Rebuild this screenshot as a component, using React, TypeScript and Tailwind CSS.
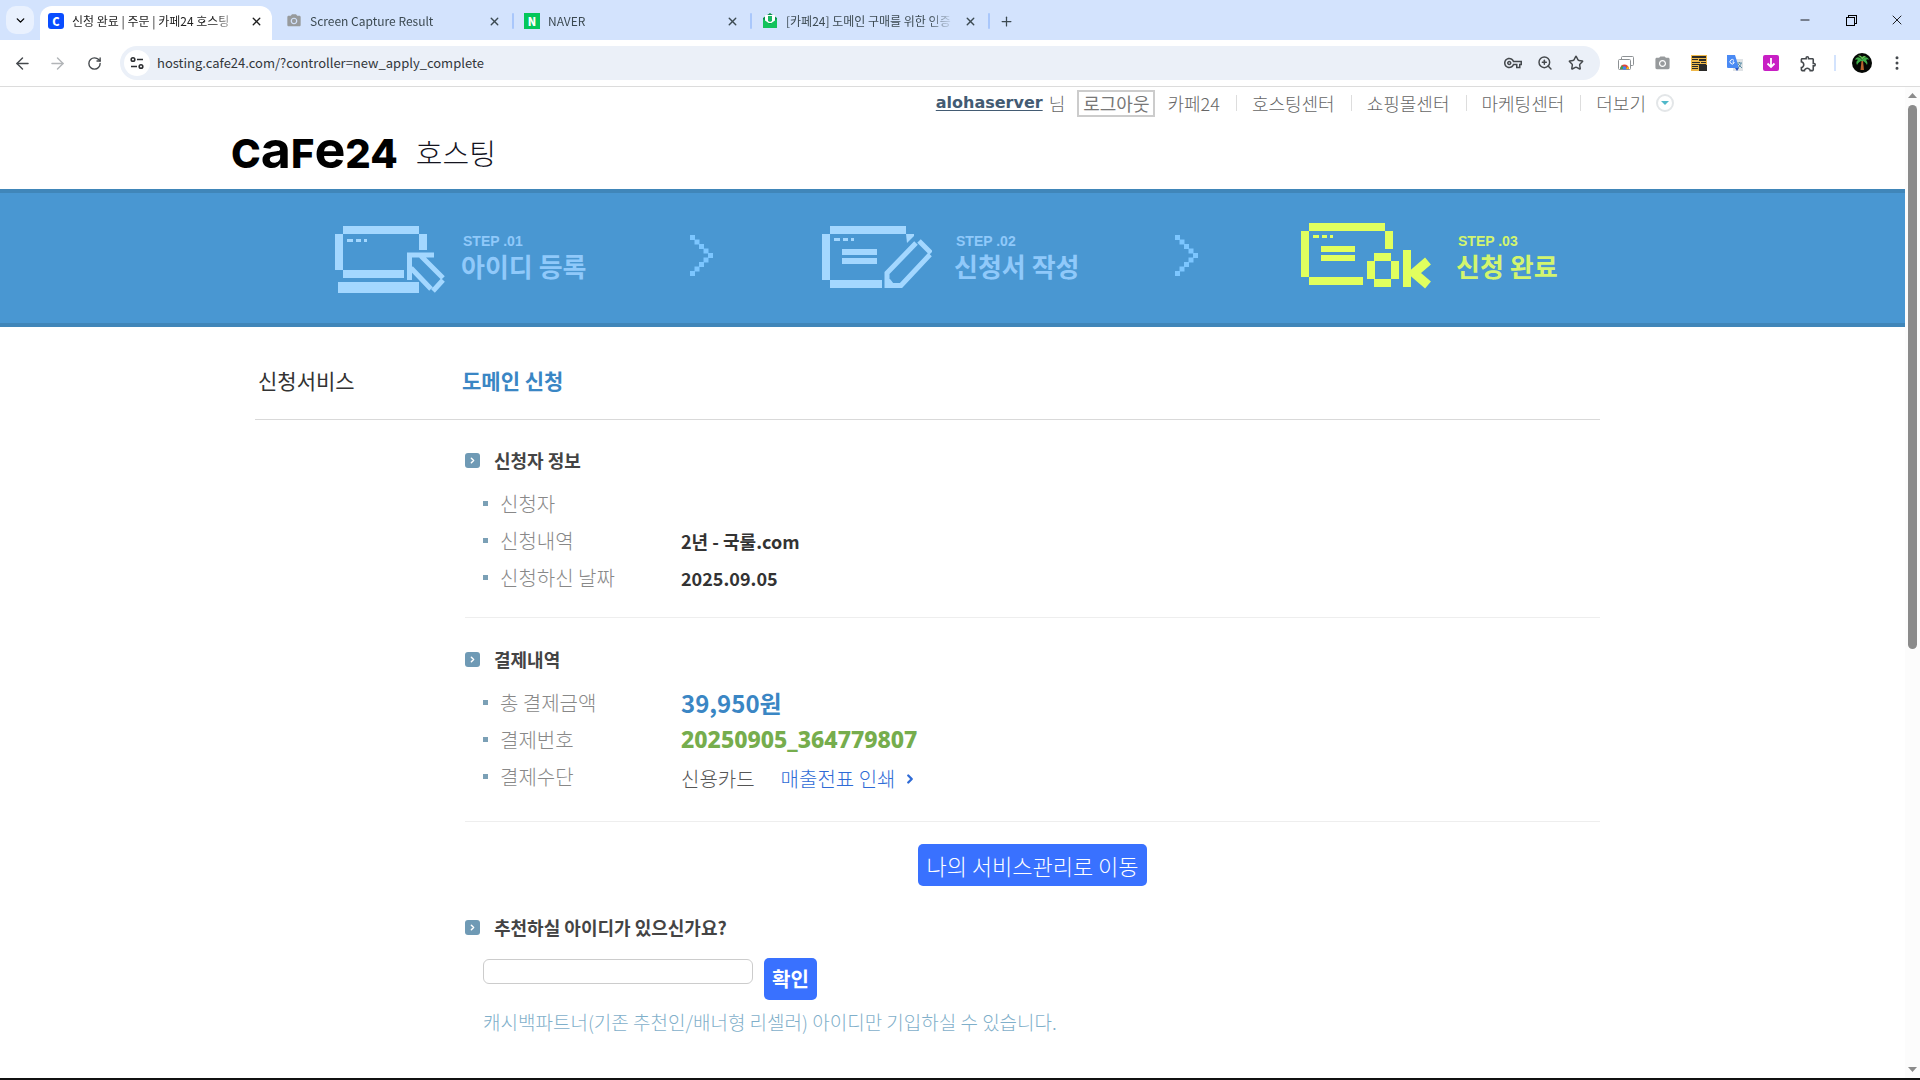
import React from 'react';
import {
  ArrowLeft,
  ArrowRight,
  ChevronDown,
  ChevronRight,
  EllipsisVertical,
  Minus,
  Plus,
  RotateCw,
  Star,
  X,
  ZoomIn,
} from 'lucide-react';
import { MdOutlineExtension, MdOutlineVpnKey, MdPhotoCamera } from 'react-icons/md';

interface TabProps {
  title: string;
  icon: React.ReactNode;
  active?: boolean;
}

const LetterIcon = ({ letter, className }: { letter: string; className: string }) => (
  <span
    className={`flex size-4 shrink-0 items-center justify-center text-[11px] leading-none font-black text-white ${className}`}
  >
    {letter}
  </span>
);

const MailIcon = () => (
  <svg viewBox="0 0 16 16" className="size-4 shrink-0">
    <path d="M1 5 8 0l7 5v9a1 1 0 0 1-1 1H2a1 1 0 0 1-1-1z" fill="#0d8f4c" />
    <rect x="3" y="2" width="10" height="8" rx="1" fill="#fff" />
    <path d="M6 3h4v5l-2 1-2-1z" fill="#19b862" />
    <path d="M1 6l7 5 7-5v8a1 1 0 0 1-1 1H2a1 1 0 0 1-1-1z" fill="#12c35c" />
  </svg>
);

const Tab = ({ title, icon, active }: TabProps) => (
  <div
    className={`flex h-[34px] items-center pb-1 ${
      active ? 'w-[232px] rounded-t-xl bg-white px-2 text-[#1f1f1f]' : 'w-[236px] px-[10px] text-[#3c4a52]'
    }`}
  >
    {icon}
    <span className="ml-2 flex-1 overflow-hidden mask-r-from-85% text-[12px] whitespace-nowrap">{title}</span>
    <button type="button" aria-label="탭 닫기" className="ml-2 flex size-4 items-center justify-center">
      <X size={13} strokeWidth={2.5} />
    </button>
  </div>
);

const TabDivider = () => <span className="mb-1 h-4 w-[2px] shrink-0 rounded bg-[#a9c7fb]" />;

function TabStrip() {
  return (
    <div className="flex h-10 shrink-0 items-end bg-[#d3e3fd] pl-[6px]">
      <button
        type="button"
        aria-label="탭 검색"
        className="mr-[6px] mb-[6px] flex size-7 items-center justify-center rounded-[10px] bg-[#e9f1fe]"
      >
        <ChevronDown size={13} strokeWidth={2.5} />
      </button>
      <Tab active title="신청 완료 | 주문 | 카페24 호스팅" icon={<LetterIcon letter="C" className="rounded-[3px] bg-[#0a4dff]" />} />
      <div className="flex items-center pl-1">
        <Tab title="Screen Capture Result" icon={<MdPhotoCamera className="size-4 shrink-0 text-[#979a9c]" />} />
        <TabDivider />
        <Tab title="NAVER" icon={<LetterIcon letter="N" className="bg-[#03c75a]" />} />
        <TabDivider />
        <Tab title="[카페24] 도메인 구매를 위한 인증" icon={<MailIcon />} />
        <TabDivider />
        <button type="button" aria-label="새 탭" className="mb-1 ml-[6px] flex size-5 items-center justify-center text-[#3c4a52]">
          <Plus size={15} strokeWidth={2} />
        </button>
      </div>
      <div className="ml-auto flex h-10 items-center">
        <button type="button" aria-label="최소화" className="flex w-[46px] justify-center">
          <Minus size={14} strokeWidth={1.5} />
        </button>
        <button type="button" aria-label="이전 크기로" className="flex w-[46px] justify-center">
          <svg viewBox="0 0 11 11" className="size-[11px]" fill="none" stroke="#000" shapeRendering="crispEdges">
            <rect x="0.5" y="2.5" width="8" height="8" />
            <path d="M2.5 2V.5h8v8H9" />
          </svg>
        </button>
        <button type="button" aria-label="닫기" className="flex w-[46px] justify-center">
          <X size={16} strokeWidth={1.3} />
        </button>
      </div>
    </div>
  );
}

const Palm = () => (
  <svg viewBox="0 0 20 20" className="size-5">
    <circle cx="10" cy="10" r="10" fill="#050805" />
    <path d="M9.500 8l-1 9h3.500l-1-9z" fill="#b8622d" />
    <path d="M10 7C7 3 4 4 3 7c2-1 3 0 3 0-2 1-2 3-1 5 1-2 3-4 5-4 2 0 4 2 5 4 1-2 0-4-1-5 1-1 2-1 3 0-1-3-4-4-7 0z" fill="#3fae49" />
    <path d="M10 7c-1-3-3-4-4-4 2-1 4 0 4 2 0-2 3-3 4-1-1 0-3 1-4 3z" fill="#6bd05a" />
  </svg>
);

function Toolbar() {
  return (
    <div className="flex h-[47px] shrink-0 items-center border-b border-[#dcdcdc] bg-white pr-[14px] pl-[13px] text-[#45494d]">
      <button type="button" aria-label="뒤로"><ArrowLeft size={19} strokeWidth={1.8} /></button>
      <button type="button" aria-label="앞으로" className="ml-4 text-[#b2b5b8]"><ArrowRight size={19} strokeWidth={1.8} /></button>
      <button type="button" aria-label="새로고침" className="ml-5"><RotateCw size={15} strokeWidth={2.2} /></button>
      <div className="ml-[18px] flex h-[34px] flex-1 items-center rounded-full bg-[#ebf0f8] pr-4 pl-1">
        <button type="button" aria-label="사이트 정보" className="flex size-[26px] items-center justify-center rounded-full bg-white">
          <svg viewBox="0 0 14 14" className="size-[14px]" fill="none" stroke="#2b2d30" strokeWidth="1.6">
            <circle cx="3" cy="3.500" r="1.800" />
            <path d="M7 3.500h6M1 10.500h6" />
            <circle cx="11" cy="10.500" r="1.800" />
          </svg>
        </button>
        <input
          type="text"
          aria-label="주소창"
          defaultValue="hosting.cafe24.com/?controller=new_apply_complete"
          className="ml-[7px] flex-1 bg-transparent text-[13px] text-[#32363a] outline-none"
        />
        <div className="flex items-center gap-[15px]">
          <MdOutlineVpnKey size={18} />
          <ZoomIn size={16} strokeWidth={2.2} />
          <Star size={16} strokeWidth={2.2} />
        </div>
      </div>
      <div className="ml-[18px] flex items-center gap-5">
        <svg viewBox="0 0 16 16" className="size-4" fill="none">
          <rect x="3.500" y="1.500" width="12" height="9" rx="1" stroke="#8d9194" />
          <rect x="0.500" y="4.500" width="12" height="10" rx="1" fill="#fff" stroke="#8d9194" />
          <path d="M2 14a4.500 4.500 0 0 1 9 0z" fill="#e0443a" />
          <path d="M2 14l2-4 2 4z" fill="#33a853" />
          <path d="M8 14l2-3 1 3z" fill="#fbbc05" />
          <circle cx="6.500" cy="13" r="1.800" fill="#4285f4" />
        </svg>
        <MdPhotoCamera size={17} className="text-[#979a9c]" />
        <svg viewBox="0 0 16 16" className="size-4" shapeRendering="crispEdges">
          <rect width="16" height="16" fill="#f0b94a" />
          <path d="M1 1h14v2H1zM1 4h6v1H1zM8 4h7v2H8zM1 7h8v1H1zM10 7h5v1h-5zM1 9h14v1H1zM1 11h6v1H1zM1 13h6v1H1zM8 10h8v6H8z" fill="#2b2a28" />
        </svg>
        <svg viewBox="0 0 16 16" className="size-4">
          <rect x="6" y="4" width="10" height="12" fill="#dfe3e6" />
          <path d="M0 0h8l4 13H1a1 1 0 0 1-1-1z" fill="#4a8af4" />
          <path d="M8 13h4l-2 3z" fill="#2a56c6" />
          <path d="M10 8h5M12.500 7v1M14 8c0 2-2 4-3 5M11 9l4 4" stroke="#5b8fa8" fill="none" />
          <path d="M7 5.500A2.200 2.200 0 1 0 7 8V7H5.500" stroke="#fff" fill="none" />
        </svg>
        <svg viewBox="0 0 16 16" className="size-4">
          <rect width="16" height="16" rx="2" fill="#c81fc4" />
          <path d="M8 3v9M4.500 8.500 8 12l3.500-3.500" stroke="#fff" strokeWidth="1.800" fill="none" />
        </svg>
        <MdOutlineExtension size={19} />
      </div>
      <span className="ml-4 h-4 w-[2px] bg-[#d3e3fd]" />
      <div className="ml-4 flex items-center gap-4">
        <Palm />
        <button type="button" aria-label="메뉴"><EllipsisVertical size={18} strokeWidth={2} /></button>
      </div>
    </div>
  );
}

const utilLinks = ['카페24', '호스팅센터', '쇼핑몰센터', '마케팅센터', '더보기'];

function SiteHeader() {
  return (
    <header className="mx-auto h-[102px] w-full max-w-[1443px]">
      <div className="flex h-8 items-center justify-end text-[18px] font-light text-[#666]">
        <a href="#" className="font-['DejaVu_Sans'] text-[16px] font-bold text-[#435b73] underline underline-offset-2">
          alohaserver
        </a>
        <span className="ml-[6px]">님</span>
        <button type="button" className="ml-3 flex h-[27px] items-center border-2 border-[#ccc] px-1 font-normal text-[#777]">
          로그아웃
        </button>
        <nav className="ml-3 flex items-center">
          {utilLinks.map((label, i) => (
            <React.Fragment key={label}>
              {i > 0 && <span className="mr-[15px] ml-4 h-4 w-px bg-[#ddd]" />}
              <a href="#">{label}</a>
            </React.Fragment>
          ))}
        </nav>
        <button
          type="button"
          aria-label="더보기 열기"
          className="ml-[10px] flex size-[18px] items-center justify-center rounded-full border-2 border-[#e3e6e8]"
        >
          <svg viewBox="0 0 8 4" className="h-1 w-2"><path d="M0 0h8L4 4z" fill="#4fb8c9" /></svg>
        </button>
      </div>
      <div className="flex h-[66px] items-center gap-[18px]">
        <a href="#" aria-label="cafe24" className="flex items-baseline font-['Inter'] text-[40px] leading-none font-extrabold text-black">
          <span>C</span>
          <span className="text-[52px] leading-[40px] font-bold">a</span>
          <span>F</span>
          <span className="text-[52px] leading-[40px] font-bold">e</span>
          <span>24</span>
        </a>
        <span className="text-[29px] leading-9 font-light text-[#14141f]">호스팅</span>
      </div>
    </header>
  );
}

// browser window shared by the three step icons
const WindowDots = ({ y }: { y: number }) => (
  <>
    <rect x="12" y={y} width="6" height="3" />
    <rect x="21" y={y} width="5" height="3" />
    <rect x="29" y={y} width="3" height="3" />
  </>
);

const ApplyIcon = () => (
  <svg viewBox="0 0 110 70" className="h-[70px] w-[110px] fill-[#a3d7ff] stroke-[#a3d7ff]" strokeWidth="0">
    <rect x="8" y="3" width="76" height="8" />
    <rect x="0" y="11" width="8" height="36" />
    <rect x="84" y="11" width="8" height="16" />
    <rect x="8" y="47" width="61" height="8" />
    <rect x="3" y="59" width="81" height="11" />
    <WindowDots y={16} />
    <path d="M99 32H74.500V57M86 33l22 22M76 45l20 21M108 57l-10 11" fill="none" strokeWidth="5" />
  </svg>
);

const WriteIcon = () => (
  <svg viewBox="0 0 110 70" className="h-[70px] w-[110px] fill-[#a3d7ff] stroke-[#a3d7ff]" strokeWidth="0">
    <rect x="8" y="3" width="76" height="8" />
    <rect x="0" y="11" width="8" height="46" />
    <rect x="8" y="57" width="52" height="8" />
    <path d="M84 11h8v2l-7 7z" />
    <rect x="20" y="26" width="35" height="6" />
    <rect x="20" y="35" width="35" height="6" />
    <WindowDots y={15} />
    <path d="M94 20 65 50v12.500h14l29-31M97 18l12 12" fill="none" strokeWidth="5" />
    <path d="M63 56h5l4 5v4h-9z" />
  </svg>
);

const DoneIcon = () => (
  <svg viewBox="0 0 130 70" className="h-[70px] w-[130px] fill-[#e1ff5e] stroke-[#e1ff5e]" strokeWidth="0">
    <rect x="8" y="0" width="76" height="8" />
    <rect x="0" y="8" width="8" height="46" />
    <rect x="84" y="8" width="8" height="18" />
    <rect x="8" y="54" width="54" height="8" />
    <rect x="20" y="23" width="34" height="6" />
    <rect x="20" y="32" width="34" height="6" />
    <WindowDots y={12} />
    <rect x="73" y="30" width="17" height="8" />
    <rect x="66" y="38" width="8" height="18" />
    <rect x="90" y="38" width="8" height="18" />
    <rect x="73" y="56" width="17" height="8" />
    <rect x="102" y="27" width="8" height="37" />
    <path d="M127 38 113 50l14 12" fill="none" strokeWidth="9" />
  </svg>
);

const arrowDots = [0, 1, 2, 3, 4, 5, 6, 7, 8];

const StepArrow = () => (
  <svg viewBox="0 0 46 82" className="mt-3 h-[41px] w-[23px] fill-[#7cc6ff]">
    {arrowDots.map((n) => (
      <rect key={n} x={(4 - Math.abs(4 - n)) * 9} y={n * 9} width="10" height="10" />
    ))}
  </svg>
);

interface StepProps {
  no: string;
  title: string;
  icon: React.ReactNode;
  className: string;
}

const Step = ({ no, title, icon, className }: StepProps) => (
  <div className={`flex ${className}`}>
    {icon}
    <div className="pt-2 font-bold">
      <p className="pl-[2px] font-['Liberation_Sans'] text-[14px] leading-5">STEP .{no}</p>
      <p className="text-[26px] leading-[29px]">{title}</p>
    </div>
  </div>
);

function StepBar() {
  return (
    <div className="h-[138px] border-y-4 border-[#4086b9] bg-[#4997d2]">
      <div className="mx-auto grid w-full max-w-[1443px] grid-cols-[355px_132px_353px_126px_1fr] pt-[30px] pl-[104px]">
        <Step no="01" title="아이디 등록" icon={<ApplyIcon />} className="gap-4 text-[#90c9fa]" />
        <StepArrow />
        <Step no="02" title="신청서 작성" icon={<WriteIcon />} className="gap-[22px] text-[#90c9fa]" />
        <StepArrow />
        <Step no="03" title="신청 완료" icon={<DoneIcon />} className="gap-[25px] text-[#d3f56f]" />
      </div>
    </div>
  );
}

const SectionTitle = ({ children }: { children: React.ReactNode }) => (
  <h3 className="flex h-[26px] items-center gap-[14px] text-[18px] font-bold text-[#444]">
    <span className="flex size-[15px] items-center justify-center rounded-[3px] bg-[#6f9ab5] text-white">
      <ChevronRight size={9} strokeWidth={4} />
    </span>
    {children}
  </h3>
);

const Row = ({ label, children }: { label: string; children?: React.ReactNode }) => (
  <div className="flex h-[37px] items-center pl-[18px] text-[20px]">
    <dt className="flex w-[198px] items-center gap-3 font-light text-[#888]">
      <span className="size-[5px] bg-[#7ba0b6]" />
      {label}
    </dt>
    <dd>{children}</dd>
  </div>
);

function Content() {
  return (
    <main className="mx-auto w-full max-w-[1443px] pr-[74px] pl-6">
      <div className="flex h-[93px] items-center border-b border-[#d9d9d9] pt-4 pl-[3px]">
        <h1 className="w-[204px] text-[21px] text-[#333]">신청서비스</h1>
        <h2 className="text-[21px] font-bold text-[#3a86c4]">도메인 신청</h2>
      </div>

      <div className="ml-[210px]">
        <section className="h-[198px] border-b border-[#eee] pt-[27px]">
          <SectionTitle>신청자 정보</SectionTitle>
          <dl className="pt-3">
            <Row label="신청자" />
            <Row label="신청내역">
              <strong className="text-[18px] text-[#333]">2년 - 국룰.com</strong>
            </Row>
            <Row label="신청하신 날짜">
              <strong className="text-[18px] text-[#333]">2025.09.05</strong>
            </Row>
          </dl>
        </section>

        <section className="h-[204px] border-b border-[#eee] pt-[28px]">
          <SectionTitle>결제내역</SectionTitle>
          <dl className="pt-3">
            <Row label="총 결제금액">
              <strong className="text-[24px] text-[#3a86c4]">39,950원</strong>
            </Row>
            <Row label="결제번호">
              <strong className="font-['Noto_Sans'] text-[23px] font-extrabold text-[#76ad4d]">20250905_364779807</strong>
            </Row>
            <Row label="결제수단">
              <span className="flex items-center pt-1 font-light text-[#555]">
                신용카드
                <a href="#" className="ml-[26px] flex items-center gap-2 text-[#2f6bd6]">
                  매출전표 인쇄 <ChevronRight size={14} strokeWidth={4} />
                </a>
              </span>
            </Row>
          </dl>
        </section>

        <div className="flex justify-center pt-[22px]">
          <button type="button" className="h-[42px] rounded-[5px] bg-[#3971ff] px-2 text-[22px] font-light text-white">
            나의 서비스관리로 이동
          </button>
        </div>

        <section className="pt-[28px]">
          <SectionTitle>
            <label htmlFor="recommender">추천하실 아이디가 있으신가요?</label>
          </SectionTitle>
          <div className="flex items-start gap-[11px] pt-[18px] pl-[18px]">
            <input id="recommender" type="text" className="mt-[1px] h-[25px] w-[270px] rounded-md border border-[#ccc] px-2 text-[16px]" />
            <button type="button" className="h-[42px] rounded-[5px] bg-[#3971ff] px-2 text-[20px] font-bold text-white">
              확인
            </button>
          </div>
          <p className="pt-2 pl-[18px] text-[19px] leading-7 font-light text-[#7fafca]">
            캐시백파트너(기존 추천인/배너형 리셀러) 아이디만 기입하실 수 있습니다.
          </p>
        </section>
      </div>
    </main>
  );
}

const ScrollBar = () => (
  <div className="flex w-[15px] shrink-0 flex-col items-center bg-[#fcfcfc] py-[6px]">
    <svg viewBox="0 0 9 5" className="h-[5px] w-[9px]"><path d="M0 5h9L4.500 0z" fill="#8b8b8b" /></svg>
    <span className="mt-[7px] h-5/9 w-[9px] rounded-full bg-[#8b8b8b]" />
    <svg viewBox="0 0 9 5" className="mt-auto h-[5px] w-[9px]"><path d="M0 0h9L4.500 5z" fill="#8b8b8b" /></svg>
  </div>
);

const App: React.FC = () => {
  return (
    <div className="flex h-screen flex-col overflow-hidden border-b-2 border-[#111] bg-white font-['Noto_Sans_CJK_KR',sans-serif]">
      <TabStrip />
      <Toolbar />
      <div className="flex min-h-0 flex-1">
        <div className="min-w-0 flex-1 overflow-hidden">
          <SiteHeader />
          <StepBar />
          <Content />
        </div>
        <ScrollBar />
      </div>
    </div>
  );
};

export default App;
